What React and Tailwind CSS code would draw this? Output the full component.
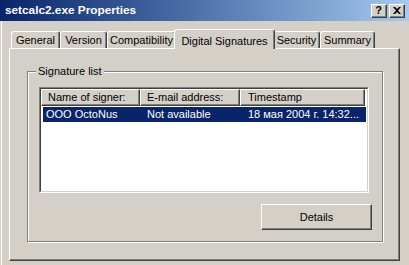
const tabs = [
  { label: 'General', w: 'w-[49px]' },
  { label: 'Version', w: 'w-[47px]' },
  { label: 'Compatibility', w: 'w-[69px]' },
  { label: 'Digital Signatures', w: 'w-[101px]', active: true },
  { label: 'Security', w: 'w-[47px]' },
  { label: 'Summary', w: 'w-[55px]' },
]

const raised =
  'border-t border-l border-white border-r border-b border-r-[#404040] border-b-[#404040] shadow-[inset_-1px_-1px_0_#808080]'

const TitleButton = ({ children }) => (
  <div className={`w-[16px] h-[14px] bg-[#d4d0c8] flex items-center justify-center ${raised}`}>
    {children}
  </div>
)

const App = () => {
  return (
    <div
      className="w-[409px] h-[265px] bg-[#d4d0c8] flex flex-col overflow-hidden text-[11px] text-black"
      style={{ fontFamily: '"Liberation Sans", Arial, sans-serif' }}
    >
      {/* Title bar */}
      <div className="h-[21px] shrink-0 flex items-center bg-linear-to-r from-[#0a246a] to-[#a6caf0] pl-[5px] pr-[4px]">
        <span className="text-white font-bold text-[11.8px] leading-none">setcalc2.exe Properties</span>
        <div className="ml-auto flex gap-[2px]">
          <TitleButton>
            <span className="font-bold text-[11px] leading-none pr-[1px]">?</span>
          </TitleButton>
          <TitleButton>
            <svg width="8" height="7" viewBox="0 0 8 7" className="mr-[1px]">
              <path d="M0 0h2l2 2 2-2h2L5 3.5 8 7H6L4 5 2 7H0l3-3.5z" fill="#000" />
            </svg>
          </TitleButton>
        </div>
      </div>

      {/* Body */}
      <div className="flex-1 flex flex-col ml-[1px] border-l border-white pl-[7px]">
        {/* Tabs */}
        <div className="mt-[8px] h-[19px] flex items-end pl-[2px]">
          {tabs.map((t) =>
            t.active ? (
              <div
                key={t.label}
                className={`${t.w} -mx-[2px] h-[20px] -mb-[1px] relative z-10 bg-[#d4d0c8] border-t border-l border-white border-r border-r-[#404040] rounded-t-[3px] shadow-[inset_-1px_0_0_#808080] flex items-start justify-center pt-[3px]`}
              >
                {t.label}
              </div>
            ) : (
              <div
                key={t.label}
                className={`${t.w} h-[17px] border-t border-l border-white border-r border-r-[#404040] rounded-t-[3px] shadow-[inset_-1px_0_0_#808080] flex items-center justify-center pt-[1px]`}
              >
                {t.label}
              </div>
            )
          )}
        </div>

        {/* Panel */}
        <div className="w-[391px] h-[213px] border-t border-l border-white border-r border-b border-r-[#404040] border-b-[#404040] shadow-[inset_-1px_-1px_0_#808080] pl-[17px] pt-[22px]">
          {/* Group box */}
          <div className="relative w-[356px] h-[171px] border border-[#808080] shadow-[inset_1px_1px_0_white,1px_1px_0_white] pl-[11px] pt-[15px] pr-[10px]">
            <span className="absolute left-[8px] -top-[7px] bg-[#d4d0c8] px-[2px] leading-[13px]">
              Signature list
            </span>

            {/* List view */}
            <div className="w-[330px] h-[106px] bg-white border border-t-[#808080] border-l-[#808080] border-r-white border-b-white">
              <div className="w-full h-full border border-t-[#404040] border-l-[#404040] border-r-[#d4d0c8] border-b-[#d4d0c8]">
                <div className="flex h-[17px]">
                  {[
                    ['Name of signer:', 'w-[99px]', 'pl-[6px]'],
                    ['E-mail address:', 'w-[100px]', 'pl-[6px]'],
                    ['Timestamp', 'w-[125px]', 'pl-[7px]'],
                  ].map(([label, w, p]) => (
                    <div
                      key={label}
                      className={`${w} ${p} bg-[#d4d0c8] flex items-center ${raised}`}
                    >
                      {label}
                    </div>
                  ))}
                </div>
                <div className="mt-[1px] ml-[2px] w-[323px] h-[15px] bg-[#0a246a] text-white flex items-center">
                  <div className="w-[97px] pl-[3px]">OOO OctoNus</div>
                  <div className="w-[100px] pl-[7px]">Not available</div>
                  <div className="flex-1 pl-[8px] whitespace-nowrap">18 мая 2004 г. 14:32...</div>
                </div>
              </div>
            </div>

            <div className="flex justify-end mt-[11px]">
              <button
                className={`w-[111px] h-[26px] bg-[#d4d0c8] flex items-center justify-center ${raised}`}
              >
                Details
              </button>
            </div>
          </div>
        </div>
      </div>
    </div>
  )
}

export default App
